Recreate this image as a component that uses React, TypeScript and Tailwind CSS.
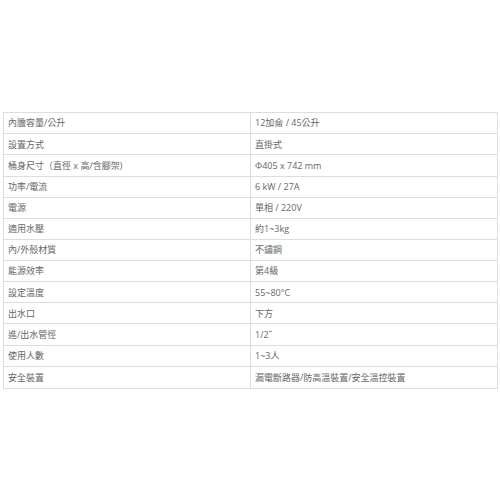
const specs = [
  ["內膽容量/公升", "12加侖 / 45公升"],
  ["設置方式", "直掛式"],
  ["桶身尺寸（直徑 x 高/含腳架)", "Φ405 x 742 mm"],
  ["功率/電流", "6 kW / 27A"],
  ["電源", "單相 / 220V"],
  ["適用水壓", "約1~3kg"],
  ["內/外殼材質", "不鏽鋼"],
  ["能源效率", "第4級"],
  ["設定溫度", "55~80°C"],
  ["出水口", "下方"],
  ["進/出水管徑", "1/2˝"],
  ["使用人數", "1~3人"],
  ["安全裝置", "漏電斷路器/防高溫裝置/安全溫控裝置"],
];

export default function App() {
  return (
    <div
      className="flex h-[500px] w-[500px] items-center bg-white text-[9px] text-[#666]"
      style={{ fontFamily: '"Open Sans", "Noto Sans CJK TC", sans-serif' }}
    >
      <div className="ml-[3px] mt-[1px] w-[495px] border border-[#ddd]">
        {specs.map(([label, value], i) => (
          <div
            key={label}
            className={`flex h-[21.15px] items-center ${
              i < specs.length - 1 ? "border-b border-[#ddd]" : ""
            }`}
          >
            <div className="flex h-full w-[247px] items-center border-r border-[#ddd] pl-[4px]">
              {label}
            </div>
            <div className="flex h-full flex-1 items-center pl-[4px]">{value}</div>
          </div>
        ))}
      </div>
    </div>
  );
}
